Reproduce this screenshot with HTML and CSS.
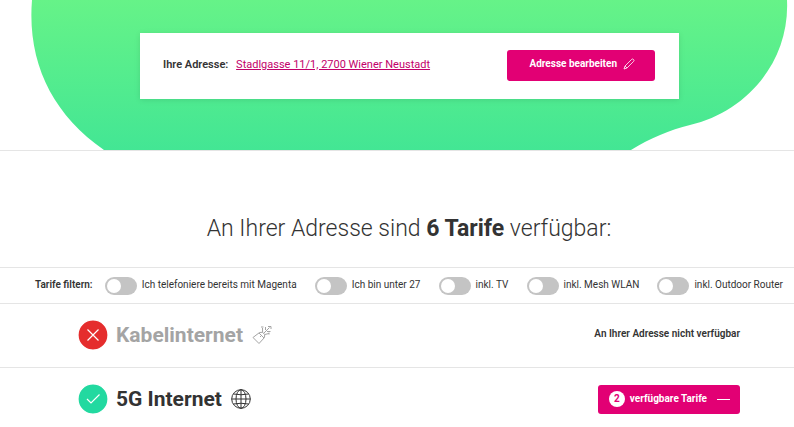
FILE: index.html
```html
<!DOCTYPE html>
<html lang="de">
<head>
<meta charset="utf-8">
<meta name="viewport" content="width=device-width, initial-scale=1">
<title>Tarife</title>
<link rel="stylesheet" href="styles.css">
</head>
<body>
<header class="hero">
  <svg class="hero-shape" viewBox="0 0 794 150" preserveAspectRatio="none" aria-hidden="true">
    <defs>
      <linearGradient id="green" x1="0" y1="0" x2="0" y2="1">
        <stop offset="0" stop-color="#66f388"/>
        <stop offset="1" stop-color="#43e694"/>
      </linearGradient>
    </defs>
    <path fill="url(#green)" d="M32 0C27 62 52 114 104 150H631C650 138 670 130 690 125C746 112 790 62 787 0Z"/>
  </svg>
  <section class="address-card">
    <p class="address"><strong>Ihre Adresse:</strong> <a href="#adresse">Stadlgasse 11/1, 2700 Wiener Neustadt</a></p>
    <button class="button edit" type="button">Adresse bearbeiten
      <svg class="pencil" viewBox="0 0 12 12" aria-hidden="true"><path d="M1 11L2 8L8.600 1.400Q9.500.5 10.500 1.500T10.600 3.400L4 10ZM2 8L4 10"/></svg>
    </button>
  </section>
</header>
<main>
  <h1 class="headline">An Ihrer Adresse sind <strong>6 Tarife</strong> verfügbar:</h1>
  <form class="filters">
    <span class="filters-title">Tarife filtern:</span>
    <label class="filter"><input class="toggle" type="checkbox" role="switch"><span>Ich telefoniere bereits mit Magenta</span></label>
    <label class="filter"><input class="toggle" type="checkbox" role="switch"><span>Ich bin unter 27</span></label>
    <label class="filter"><input class="toggle" type="checkbox" role="switch"><span>inkl. TV</span></label>
    <label class="filter"><input class="toggle" type="checkbox" role="switch"><span>inkl. Mesh WLAN</span></label>
    <label class="filter"><input class="toggle" type="checkbox" role="switch"><span>inkl. Outdoor Router</span></label>
  </form>
  <section class="row unavailable">
    <svg class="status" viewBox="0 0 30 30" aria-hidden="true"><circle cx="15" cy="15" r="15" fill="#e52d2d"/><path d="M9.500 9.500L20.500 20.500M20.500 9.500L9.500 20.500"/></svg>
    <h2>Kabelinternet</h2>
    <svg class="icon" viewBox="0 0 20 20" aria-hidden="true"><path d="M1 12.500L7 18.500L12.500 12.500L12.700 9.500L10.600 7.300L7.500 7.500ZM7 8L12 13M10.600 7.300L10.500 3M11.700 8.300L17.500 2.500M12.700 9.500L17 8.500M8 11L9 12"/><path d="M9 2H11.500M13.500 2V5M16 1.500H19V4M15 6.500H18.500M17 9.500V7.500"/></svg>
    <p class="note">An Ihrer Adresse nicht verfügbar</p>
  </section>
  <section class="row">
    <svg class="status" viewBox="0 0 30 30" aria-hidden="true"><circle cx="15" cy="15" r="15" fill="#22d9a0"/><path d="M9 15L13 19L21.500 10.500"/></svg>
    <h2>5G Internet</h2>
    <svg class="icon" viewBox="0 0 20 20" aria-hidden="true"><circle cx="10" cy="10" r="9.300"/><ellipse cx="10" cy="10" rx="5" ry="9.300"/><path d="M10 .7V19.300M.7 10H19.300M2.500 5Q10 6.500 17.500 5M2.500 15Q10 13.500 17.500 15"/></svg>
    <button class="button plans" type="button" aria-expanded="true"><span class="count">2</span>verfügbare Tarife<span class="minus"></span></button>
  </section>
</main>
</body>
</html>
```

FILE: styles.css
```css
* { box-sizing: border-box; }
body { margin: 0; background: #fff; color: #333; font-family: Roboto, "Liberation Sans", sans-serif; font-size: 11px; line-height: 16px; }
h1, h2, p { margin: 0; }
.hero { position: relative; padding: 33px 115px 51px 140px; border-bottom: 1px solid #e5e5e5; }
.hero-shape { position: absolute; inset: 0; width: 100%; height: 100%; }
.address-card { position: relative; display: flex; align-items: center; justify-content: space-between; padding: 17px 24px 18px 23px; background: #fff; box-shadow: 0 1px 6px rgba(0, 0, 0, .1); }
.address { padding-bottom: 2px; }
.address strong { font-weight: 600; margin-right: 5px; }
.address a { color: #c2006a; text-underline-offset: 1px; }
.button { display: flex; align-items: center; border: 0; border-radius: 3px; background: #e20074; color: #fff; font: 700 10px/16px Roboto, "Liberation Sans", sans-serif; cursor: pointer; }
.edit { gap: 6px; height: 31px; padding: 0 20px 3px 22px; }
.pencil { width: 12px; height: 12px; fill: none; stroke: #fff; stroke-width: .8; }
.headline { padding: 61px 0 21px 24px; text-align: center; font-size: 23px; line-height: 34px; font-weight: 300; }
.headline strong { font-weight: 700; }
.filters { display: flex; align-items: center; justify-content: space-between; padding: 9px 11px 8px 35px; border: solid #e5e5e5; border-width: 1px 0; font-size: 10px; white-space: nowrap; line-height: 16px; }
.filters-title { margin-right: -6px; padding-bottom: 2px; font-weight: 600; }
.filter { display: flex; align-items: center; gap: 5px; }
.filter span { padding-bottom: 2px; }
.toggle { appearance: none; width: 32px; height: 18px; margin: 0; padding: 2px; border-radius: 9px; background: #c4c4c4; cursor: pointer; }
.toggle::before { content: ""; display: block; width: 14px; height: 14px; border-radius: 50%; background: #fff; }
.toggle:checked { background: #e20074; }
.toggle:checked::before { margin-left: auto; }
.row { display: flex; align-items: center; height: 64px; padding: 0 54px 1px 78px; border-bottom: 1px solid #e5e5e5; }
.row:last-child { border-bottom-color: transparent; }
.row h2 { margin: 0 9px 0 8px; font-size: 21px; line-height: 28px; font-weight: 700; }
.status { width: 30px; height: 30px; fill: none; stroke: #fff; stroke-width: 1.2; }
.icon { width: 20px; height: 20px; fill: none; stroke: #333; stroke-width: 1; }
.unavailable h2 { color: #a4a4a4; }
.unavailable .icon { stroke: #a4a4a4; }
.note { margin-left: auto; padding-bottom: 2px; font-size: 10px; font-weight: 600; }
.plans { height: 29px; margin-left: auto; padding: 0 10px 0 11px; }
.count { width: 16px; height: 16px; margin-right: 5px; border-radius: 50%; background: #fff; color: #e20074; text-align: center; }
.minus { width: 13px; height: 1px; margin-left: 10px; background: #fff; }
```
